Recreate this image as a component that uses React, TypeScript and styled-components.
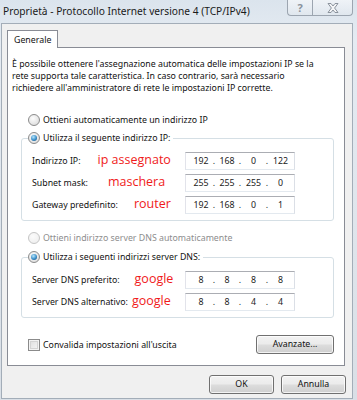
import React from "react";
import styled, { createGlobalStyle } from "styled-components";

const GlobalStyle = createGlobalStyle`
  html, body { margin: 0; padding: 0; }
  body {
    font-family: "Noto Sans", "Segoe UI", sans-serif;
    font-size: 8.8px;
    color: #111;
    background: #fff;
  }
  * { box-sizing: border-box; }
`;

const Window = styled.div`
  width: 357px;
  height: 400px;
  display: flex;
  flex-direction: column;
  background: linear-gradient(#dbe4ed, #e5ebf2 40px, #d9dfe6);
  overflow: hidden;
`;

const TitleBar = styled.div`
  height: 23px;
  display: flex;
  align-items: flex-start;
`;

const Title = styled.div`
  flex: 1;
  padding: 4px 0 0 3px;
  font-size: 10.2px;
  line-height: 14px;
  color: #1a1a1a;
  white-space: nowrap;
`;

const Caption = styled.div`
  display: flex;
  margin-right: 4px;
`;

const CaptionButton = styled.div<{ $w: number; $first?: boolean; $last?: boolean }>`
  width: ${(p) => p.$w}px;
  height: 16px;
  display: grid;
  place-items: center;
  border: 1px solid #9ca5b0;
  border-top: none;
  ${(p) => (p.$first ? "border-right: none; border-bottom-left-radius: 4px;" : "")}
  ${(p) => (p.$last ? "border-bottom-right-radius: 4px;" : "")}
  background: linear-gradient(rgba(255, 255, 255, 0.55), rgba(225, 231, 238, 0.55));
  color: #8a929c;
  font-weight: bold;
  font-size: 11px;
  line-height: 1;
`;

const Client = styled.div`
  flex: 1;
  margin: 0 4px 1px 1px;
  border: 1px solid #a3adb8;
  background: #f0f0f0;
  padding: 6px 7px 0 5px;
  display: flex;
  flex-direction: column;
`;

const TabStrip = styled.div`
  display: flex;
`;

const Tab = styled.div`
  position: relative;
  z-index: 1;
  width: 51px;
  height: 18px;
  margin-bottom: -1px;
  padding: 3px 0 0 6px;
  border: 1px solid #898c95;
  border-bottom: none;
  background: #fff;
  line-height: 12px;
`;

const Panel = styled.div`
  border: 1px solid #898c95;
  background: #fff;
  padding: 10px 10px 11px 4px;
`;

const Para = styled.p`
  margin: 0;
  line-height: 12px;
  white-space: nowrap;
`;

const RadioRow = styled.div<{ $top: number; $disabled?: boolean }>`
  display: flex;
  align-items: center;
  gap: 3px;
  height: 16px;
  margin-top: ${(p) => p.$top}px;
  padding-left: 16px;
  color: ${(p) => (p.$disabled ? "#8d8d8d" : "#111")};
`;

const RadioDot = styled.span<{ $checked?: boolean; $disabled?: boolean }>`
  width: 12px;
  height: 12px;
  border-radius: 50%;
  border: 1px solid ${(p) => (p.$disabled ? "#c5c5c5" : "#8b8b8b")};
  background: ${(p) =>
    p.$disabled
      ? "radial-gradient(circle at 40% 35%, #fbfbfb, #ececec)"
      : "radial-gradient(circle at 40% 35%, #fdfdfd, #d6d6d6)"};
  display: grid;
  place-items: center;
  flex: none;
  &::after {
    content: "";
    display: ${(p) => (p.$checked ? "block" : "none")};
    width: 6px;
    height: 6px;
    border-radius: 50%;
    background: radial-gradient(circle at 40% 35%, #b9e6fb 0, #3a8fca 55%, #0d3e68 100%);
  }
`;

const Group = styled.fieldset<{ $top: number }>`
  margin: ${(p) => p.$top}px 0 0 9px;
  padding: 4px 38px 4px 6px;
  border: 1px solid #d5dfe5;
  border-radius: 3px;
  min-width: 0;
`;

const Legend = styled.legend`
  display: flex;
  align-items: center;
  gap: 3px;
  height: 16px;
  padding: 0 3px 0 0;
`;

const FieldRow = styled.div`
  display: flex;
  align-items: center;
  height: 22px;
  padding-left: 4px;
  white-space: nowrap;
`;

const Note = styled.span<{ $gap: number }>`
  margin-left: ${(p) => p.$gap}px;
  font-family: "Open Sans", "Noto Sans", sans-serif;
  font-size: 12.5px;
  line-height: 1;
  color: #f01a1a;
  margin-top: -2px;
`;

const IpBox = styled.div`
  margin-left: auto;
  width: 110px;
  height: 18px;
  border: 1px solid;
  border-color: #abadb3 #dbdfe6 #e3e9ef #e2e3ea;
  background: #fff;
  display: grid;
  grid-template-columns: 20px 6px 20px 6px 21px 6px 21px;
  padding-left: 5px;
  align-items: center;
  text-align: center;
  color: #222;
`;

const BottomRow = styled.div`
  display: flex;
  align-items: center;
  justify-content: space-between;
  margin-top: 17px;
  padding-left: 16px;
`;

const CheckLabel = styled.label`
  display: flex;
  align-items: center;
  gap: 3px;
`;

const CheckBox = styled.span`
  width: 12px;
  height: 12px;
  border: 1px solid #8b8b8b;
  background: linear-gradient(135deg, #dcdcdc, #f8f8f8);
  box-shadow: inset 0 0 0 1px #f3f3f3, inset 0 0 0 2px #d4d4d4;
  flex: none;
`;

const Button = styled.button<{ $w: number }>`
  width: ${(p) => p.$w}px;
  height: 19px;
  padding: 0;
  border: 1px solid #707070;
  border-radius: 3px;
  background: linear-gradient(#f2f2f2 0%, #ebebeb 49%, #dddddd 51%, #cfcfcf 100%);
  box-shadow: inset 0 0 0 1px rgba(255, 255, 255, 0.75);
  font: inherit;
  color: #111;
  line-height: 1;
`;

const Footer = styled.div`
  display: flex;
  justify-content: flex-end;
  gap: 7px;
  padding-top: 9px;
  margin-right: -1px;
`;

function Ip({ parts }: { parts: string[] }) {
  return (
    <IpBox>
      <span>{parts[0]}</span>
      <span>.</span>
      <span>{parts[1]}</span>
      <span>.</span>
      <span>{parts[2]}</span>
      <span>.</span>
      <span>{parts[3]}</span>
    </IpBox>
  );
}

function CloseGlyph() {
  return (
    <svg width="12" height="10" viewBox="0 0 12 10">
      <path
        d="M1 0.5 L4 0.5 L6 3 L8 0.5 L11 0.5 L7.6 5 L11 9.5 L8 9.5 L6 7 L4 9.5 L1 9.5 L4.4 5 Z"
        fill="#f4f5f7"
        stroke="#8b939d"
        strokeWidth="1"
        strokeLinejoin="round"
      />
    </svg>
  );
}

export default function App() {
  return (
    <>
      <GlobalStyle />
      <Window>
        <TitleBar>
          <Title>Proprietà - Protocollo Internet versione 4 (TCP/IPv4)</Title>
          <Caption>
            <CaptionButton $w={25} $first>?</CaptionButton>
            <CaptionButton $w={41} $last>
              <CloseGlyph />
            </CaptionButton>
          </Caption>
        </TitleBar>
        <Client>
          <TabStrip>
            <Tab>Generale</Tab>
          </TabStrip>
          <Panel>
            <Para>
              È possibile ottenere l'assegnazione automatica delle impostazioni IP se la
              <br />
              rete supporta tale caratteristica. In caso contrario, sarà necessario
              <br />
              richiedere all'amministratore di rete le impostazioni IP corrette.
            </Para>
            <RadioRow $top={18}>
              <RadioDot />
              Ottieni automaticamente un indirizzo IP
            </RadioRow>
            <Group $top={2}>
              <Legend>
                <RadioDot $checked />
                Utilizza il seguente indirizzo IP:
              </Legend>
              <FieldRow>
                Indirizzo IP:
                <Note $gap={17}>ip assegnato</Note>
                <Ip parts={["192", "168", "0", "122"]} />
              </FieldRow>
              <FieldRow>
                Subnet mask:
                <Note $gap={20}>maschera</Note>
                <Ip parts={["255", "255", "255", "0"]} />
              </FieldRow>
              <FieldRow>
                Gateway predefinito:
                <Note $gap={16}>router</Note>
                <Ip parts={["192", "168", "0", "1"]} />
              </FieldRow>
            </Group>
            <RadioRow $top={9} $disabled>
              <RadioDot $disabled />
              Ottieni indirizzo server DNS automaticamente
            </RadioRow>
            <Group $top={3}>
              <Legend>
                <RadioDot $checked />
                Utilizza i seguenti indirizzi server DNS:
              </Legend>
              <FieldRow>
                Server DNS preferito:
                <Note $gap={15}>google</Note>
                <Ip parts={["8", "8", "8", "8"]} />
              </FieldRow>
              <FieldRow>
                Server DNS alternativo:
                <Note $gap={4}>google</Note>
                <Ip parts={["8", "8", "4", "4"]} />
              </FieldRow>
            </Group>
            <BottomRow>
              <CheckLabel>
                <CheckBox />
                Convalida impostazioni all'uscita
              </CheckLabel>
              <Button $w={78}>Avanzate...</Button>
            </BottomRow>
          </Panel>
          <Footer>
            <Button $w={65}>OK</Button>
            <Button $w={65}>Annulla</Button>
          </Footer>
        </Client>
      </Window>
    </>
  );
}
